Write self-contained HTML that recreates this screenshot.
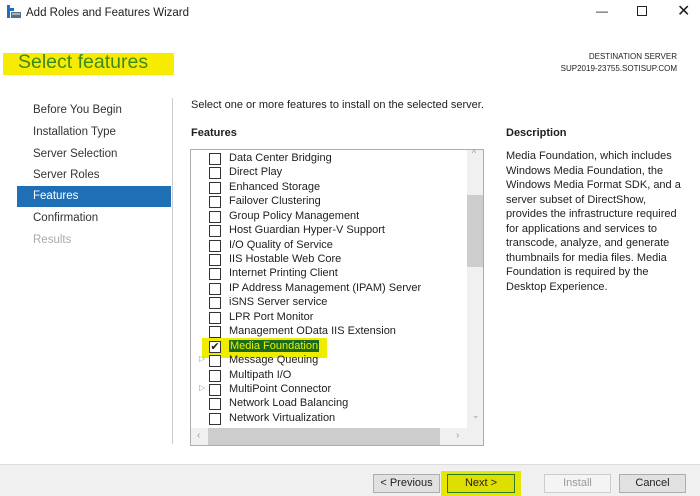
<!DOCTYPE html>
<html><head><style>
*{margin:0;padding:0;box-sizing:border-box}
body{width:700px;height:496px;background:#fff;font-family:"Liberation Sans",sans-serif;font-size:11px;color:#1e1e1e;position:relative;overflow:hidden}
.a{position:absolute;white-space:nowrap}
.nav{left:33px;font-size:11.5px;color:#333}
.row{position:absolute;left:209px;height:14px;width:250px;font-size:11px;white-space:nowrap}
.cb{position:absolute;left:0;top:1px;width:12px;height:12px;border:1px solid #333;background:#fff}
.row span{position:absolute;left:20px;top:0;white-space:nowrap}
.btn{position:absolute;top:474px;height:19px;border:1px solid #adadad;background:#e1e1e1;font-size:11px;text-align:center;line-height:17px}
</style></head><body>
<svg class="a" style="left:7px;top:5px" width="14" height="14"><rect x="0" y="0" width="3" height="13" fill="#1e6fc0"/><rect x="3" y="3" width="4" height="3" fill="#1e6fc0"/><rect x="4" y="7" width="10" height="6" fill="#5a6f82"/><rect x="5" y="8" width="8" height="2" fill="#9fb3c4"/></svg>
<div class="a" style="left:26px;top:7px;font-size:11.5px">Add Roles and Features Wizard</div>
<div class="a" style="left:596px;top:4px;font-size:12px">—</div>
<div class="a" style="left:637px;top:6px;width:10px;height:10px;border:1px solid #222"></div>
<div class="a" style="left:677px;top:1px;font-size:16px">✕</div>
<div class="a" style="left:3px;top:53px;width:171px;height:22px;background:#f7ec00"></div>
<div class="a" style="left:18px;top:51px;font-size:19.5px;color:#3d8a1c">Select features</div>
<div class="a" style="left:560px;top:51px;width:117px;text-align:right;font-size:8px;line-height:12px;color:#222">DESTINATION SERVER<br>SUP2019-23755.SOTISUP.COM</div>
<div class="a nav" style="top:104px">Before You Begin</div>
<div class="a nav" style="top:126px">Installation Type</div>
<div class="a nav" style="top:148px">Server Selection</div>
<div class="a nav" style="top:169px">Server Roles</div>
<div class="a" style="left:17px;top:186px;width:154px;height:21px;background:#1f6fb7"></div>
<div class="a nav" style="top:190px;color:#fff">Features</div>
<div class="a nav" style="top:212px">Confirmation</div>
<div class="a nav" style="top:234px;color:#aaa">Results</div>
<div class="a" style="left:172px;top:98px;width:1px;height:346px;background:#ccc"></div>
<div class="a" style="left:191px;top:99px;font-size:11px">Select one or more features to install on the selected server.</div>
<div class="a" style="left:191px;top:127px;font-weight:bold;font-size:11px">Features</div>
<div class="a" style="left:506px;top:127px;font-weight:bold;font-size:11px">Description</div>
<div class="a" style="left:506px;top:149px;font-size:11px;line-height:14.5px">Media Foundation, which includes<br>Windows Media Foundation, the<br>Windows Media Format SDK, and a<br>server subset of DirectShow,<br>provides the infrastructure required<br>for applications and services to<br>transcode, analyze, and generate<br>thumbnails for media files. Media<br>Foundation is required by the<br>Desktop Experience.</div>
<div class="a" style="left:190px;top:149px;width:294px;height:297px;border:1px solid #adadad;background:#fff;overflow:hidden">
 <div class="a" style="left:276px;top:0;width:17px;height:278px;background:#f0f0f0"></div>
 <div class="a" style="left:276px;top:45px;width:17px;height:72px;background:#cdcdcd"></div>
 <div class="a" style="left:281px;top:-2px;font-size:9px;color:#999">^</div>
 <div class="a" style="left:281px;top:260px;font-size:9px;color:#999">⌄</div>
 <div class="a" style="left:0;top:278px;width:293px;height:17px;background:#f0f0f0"></div>
 <div class="a" style="left:17px;top:278px;width:232px;height:17px;background:#cdcdcd"></div>
 <div class="a" style="left:6px;top:280px;font-size:10px;color:#999">‹</div>
 <div class="a" style="left:265px;top:280px;font-size:10px;color:#999">›</div>
</div>
<div class="a" style="left:202px;top:338px;width:125px;height:20px;background:#f0ec00"></div>
<div class="row" style="top:152px"><div class="cb"></div><span>Data Center Bridging</span></div>
<div class="row" style="top:166px"><div class="cb"></div><span>Direct Play</span></div>
<div class="row" style="top:181px"><div class="cb"></div><span>Enhanced Storage</span></div>
<div class="row" style="top:195px"><div class="cb"></div><span>Failover Clustering</span></div>
<div class="row" style="top:210px"><div class="cb"></div><span>Group Policy Management</span></div>
<div class="row" style="top:224px"><div class="cb"></div><span>Host Guardian Hyper-V Support</span></div>
<div class="row" style="top:239px"><div class="cb"></div><span>I/O Quality of Service</span></div>
<div class="row" style="top:253px"><div class="cb"></div><span>IIS Hostable Web Core</span></div>
<div class="row" style="top:267px"><div class="cb"></div><span>Internet Printing Client</span></div>
<div class="row" style="top:282px"><div class="cb"></div><span>IP Address Management (IPAM) Server</span></div>
<div class="row" style="top:296px"><div class="cb"></div><span>iSNS Server service</span></div>
<div class="row" style="top:311px"><div class="cb"></div><span>LPR Port Monitor</span></div>
<div class="row" style="top:325px"><div class="cb"></div><span>Management OData IIS Extension</span></div>
<div class="row" style="top:340px"><div class="cb" style="font-size:11px;line-height:10px;text-align:center">✔</div><span style="background:#1c6b1c;color:#e8f000;padding:0 1px">Media Foundation</span></div>
<div class="row" style="top:354px"><div class="cb"></div><span>Message Queuing</span></div>
<div class="row" style="top:369px"><div class="cb"></div><span>Multipath I/O</span></div>
<div class="row" style="top:383px"><div class="cb"></div><span>MultiPoint Connector</span></div>
<div class="row" style="top:397px"><div class="cb"></div><span>Network Load Balancing</span></div>
<div class="row" style="top:412px"><div class="cb"></div><span>Network Virtualization</span></div>
<div class="a" style="left:199px;top:354px;font-size:8px;color:#999">▷</div>
<div class="a" style="left:199px;top:383px;font-size:8px;color:#999">▷</div>
<div class="a" style="left:0;top:464px;width:700px;height:32px;background:#f0f0f0;border-top:1px solid #ddd"></div>
<div class="btn" style="left:373px;width:67px">&lt; Previous</div>
<div class="a" style="left:441px;top:471px;width:80px;height:25px;background:#e6e600"></div>
<div class="btn" style="left:447px;width:68px;border:1px solid #2a7a2a;background:#dede00">Next &gt;</div>
<div class="btn" style="left:544px;width:67px;background:#f4f4f4;border-color:#ccc;color:#999">Install</div>
<div class="btn" style="left:619px;width:67px">Cancel</div>
</body></html>
